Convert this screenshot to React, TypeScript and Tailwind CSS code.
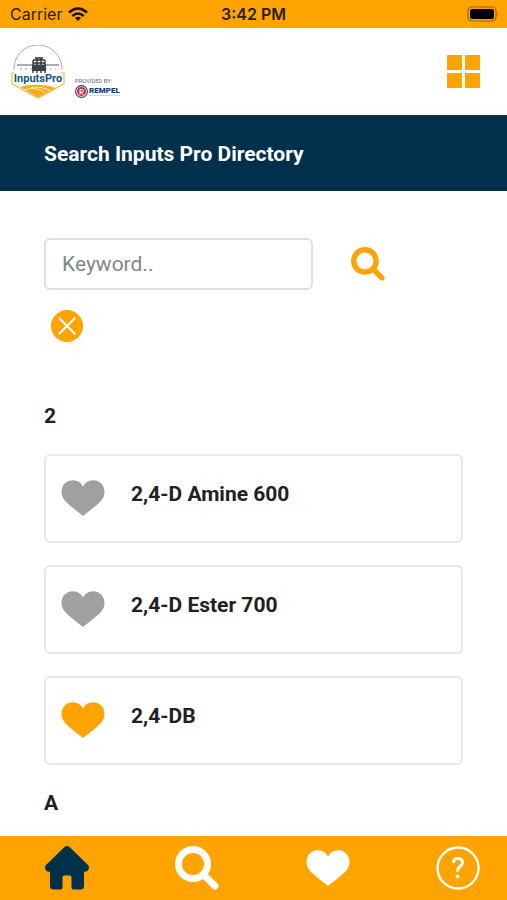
import { useState } from "react";
import type { FormEvent } from "react";

interface Product {
  id: number;
  name: string;
}

interface ProductGroup {
  letter: string;
  products: Product[];
}

const GROUPS: ProductGroup[] = [
  {
    letter: "2",
    products: [
      { id: 1, name: "2,4-D Amine 600" },
      { id: 2, name: "2,4-D Ester 700" },
      { id: 3, name: "2,4-DB" },
    ],
  },
  { letter: "A", products: [] },
];

function HeartIcon({ className }: { className?: string }) {
  return (
    <svg viewBox="0 0 44 36" className={className} aria-hidden="true">
      <path
        d="M22 36C16 31 8 25.500 3.800 20.500 1.600 17.900.5 15.200.5 12 .5 5.200 5.400.3 12 .3c4.300 0 7.800 2.200 10 6.200 2.200-4 5.700-6.200 10-6.200 6.600 0 11.500 4.900 11.500 11.700 0 3.200-1.100 5.900-3.300 8.500C36 25.500 28 31 22 36z"
        fill="currentColor"
      />
    </svg>
  );
}

function SearchIcon({ className }: { className?: string }) {
  return (
    <svg viewBox="0 0 44 44" className={className} aria-hidden="true">
      <circle
        cx="18"
        cy="18"
        r="14.5"
        fill="none"
        stroke="currentColor"
        strokeWidth="7"
      />
      <path
        d="m29 29 11 11"
        stroke="currentColor"
        strokeWidth="7"
        strokeLinecap="round"
      />
    </svg>
  );
}

function HomeIcon({ className }: { className?: string }) {
  return (
    <svg viewBox="0 0 44 44" className={className} aria-hidden="true">
      <path
        d="M19.200 1.200q2.800-2.400 5.600 0L43 19q1.600 2 .6 4.200-1 2.500-3.600 2.500h-1V40q0 3.500-3.500 3.500h-7q-2 0-2-2V31.500q0-2-2-2h-5q-2 0-2 2v10q0 2-2 2h-7Q5 43.500 5 40V25.700H4q-2.600 0-3.600-2.500Q-.6 21 1 19z"
        fill="currentColor"
      />
    </svg>
  );
}

function HelpIcon({ className }: { className?: string }) {
  return (
    <svg
      viewBox="0 0 44 44"
      className={className}
      fill="none"
      stroke="currentColor"
      aria-hidden="true"
    >
      <circle cx="22" cy="22" r="20.5" strokeWidth="2.400" />
      <path d="M17.500 17v-.8q0-3.700 4.500-3.700t4.500 4q0 2-2.500 4t-2.500 4.500v.8" strokeWidth="3" />
      <circle cx="21.500" cy="30.500" r="1.900" fill="currentColor" stroke="none" />
    </svg>
  );
}

function StatusBar() {
  return (
    <div className="grid h-7 shrink-0 grid-cols-3 items-center bg-[#ffa300] px-2 font-['Inter',sans-serif] text-base text-[#2b1c00]">
      <div className="flex items-center gap-1.5 pl-0.5">
        <span>Carrier</span>
        <svg viewBox="0 0 20 14" className="h-3.5 w-5" aria-label="Wi-Fi">
          <g fill="none" stroke="#1c1300" strokeWidth="2.600">
            <path d="M1 5.500q9-8 18 0" />
            <path d="M4.300 9q5.700-5 11.400 0" />
          </g>
          <path d="M7 11q3-2.500 6 0l-3 3z" fill="#1c1300" />
        </svg>
      </div>
      <span className="text-center font-semibold">3:42 PM</span>
      <svg viewBox="0 0 32 16" className="h-4 w-8 justify-self-end" aria-label="Battery">
        <rect x="1" y="1" width="28" height="14" rx="4" fill="none" stroke="#9b6608" strokeWidth="1.200" />
        <rect x="3" y="3" width="24" height="10" rx="2" fill="#000" />
        <path d="M30.500 6q1.500 2 0 4z" fill="#9b6608" />
      </svg>
    </div>
  );
}

function InputsProLogo() {
  return (
    <svg viewBox="0 0 54 54" className="size-[54px]" role="img" aria-label="InputsPro">
      <path d="M3 24a24 24 0 0 1 48 0" fill="none" stroke="#777" strokeWidth=".9" strokeDasharray="1.500 .6" />
      <path
        d="M4 28H1v11l26 14 26-14V28h-3"
        fill="none"
        stroke="#f5bd45"
        strokeWidth="1.200"
      />
      <path d="M9 42q16-5 36 1L27 52.500z" fill="#f3ad16" />
      <path d="M13 45q13-4 21 3M20 42.500q12-1 19 3" fill="none" stroke="#fff" strokeWidth=".8" />
      <g stroke="#29323a" fill="none">
        <path d="M6 20h42" strokeWidth="1" stroke="#5c5552" />
        <path d="M9 24h36" strokeWidth="1" strokeDasharray="2 3" stroke="#a0a2a4" />
        <path d="M22 15h12M24 13h8M22 18h12M22 28V15M34 28V15M26 13v15M30 13v15" strokeWidth="1.300" />
      </g>
      <path d="M21 20h14v6H21z" fill="#3b434a" />
      <text
        x="27"
        y="37"
        textAnchor="middle"
        fontFamily="Roboto"
        fontWeight="700"
        fontSize="11"
        fill="#145678"
        stroke="#fff"
        strokeWidth="1.500"
        paintOrder="stroke"
      >
        InputsPro
      </text>
    </svg>
  );
}

function RempelLogo() {
  return (
    <svg viewBox="0 0 46 22" className="h-[22px] w-[46px]" role="img" aria-label="Rempel">
      <text x="0" y="6" fontFamily="Roboto" fontSize="5.800" fill="#666">
        PROVIDED BY:
      </text>
      <circle cx="6.500" cy="14.500" r="6.500" fill="#354669" />
      <circle cx="6.500" cy="14.500" r="5.300" fill="#fff" />
      <circle cx="6.500" cy="14.500" r="4.500" fill="#c92c49" />
      <path d="M5 17.500v-5h2q1.500 0 1.500 1.300t-1.500 1.300h-2l3.500 2.400" fill="none" stroke="#fff" />
      <text x="14" y="16" fontFamily="Roboto" fontWeight="900" fontSize="8" fill="#123f70">
        REMPEL
      </text>
      <path d="M14 18.500h31" stroke="#c3cad3" strokeDasharray="2 .7" />
    </svg>
  );
}

function Header() {
  return (
    <header className="flex h-[87px] shrink-0 items-center justify-between bg-white pl-[11px] pr-[27px]">
      <a href="#home" className="flex items-end gap-2.5">
        <InputsProLogo />
        <RempelLogo />
      </a>
      <button type="button" aria-label="Menu" className="grid grid-cols-2 gap-[3px]">
        <span className="size-[15px] bg-[#ffa300]" />
        <span className="size-[15px] bg-[#ffa300]" />
        <span className="size-[15px] bg-[#ffa300]" />
        <span className="size-[15px] bg-[#ffa300]" />
      </button>
    </header>
  );
}

interface ProductCardProps {
  product: Product;
  isFavourite: boolean;
  onToggle: (id: number) => void;
}

function ProductCard({ product, isFavourite, onToggle }: ProductCardProps) {
  return (
    <li className="flex h-[89px] items-start gap-[26px] rounded-md border-2 border-[#e8e8e8] px-[15px] pt-6">
      <button
        type="button"
        aria-label={`Favourite ${product.name}`}
        aria-pressed={isFavourite}
        onClick={() => onToggle(product.id)}
        className={isFavourite ? "text-[#ffa300]" : "text-[#a0a0a0]"}
      >
        <HeartIcon className="h-9 w-11" />
      </button>
      <a href={`#product-${product.id}`} className="font-bold leading-7">
        {product.name}
      </a>
    </li>
  );
}

function BottomNav() {
  return (
    <nav className="flex h-16 shrink-0 items-center justify-between bg-[#ffa300] pl-[45px] pr-[27px] text-white">
      <a href="#home" aria-label="Home" className="text-[#00304a]">
        <HomeIcon className="size-11" />
      </a>
      <a href="#search" aria-label="Search">
        <SearchIcon className="size-11" />
      </a>
      <a href="#favourites" aria-label="Favourites">
        <HeartIcon className="h-9 w-11" />
      </a>
      <a href="#help" aria-label="Help">
        <HelpIcon className="size-11" />
      </a>
    </nav>
  );
}

export default function App() {
  const [keyword, setKeyword] = useState("");
  const [query, setQuery] = useState("");
  const [favourites, setFavourites] = useState<number[]>([3]);

  function handleSearch(e: FormEvent) {
    e.preventDefault();
    setQuery(keyword.toLowerCase());
  }

  function handleClear() {
    setKeyword("");
    setQuery("");
  }

  function toggleFavourite(id: number) {
    setFavourites((prev) =>
      prev.includes(id) ? prev.filter((f) => f !== id) : [...prev, id],
    );
  }

  return (
    <div className="flex h-dvh flex-col bg-white font-['Roboto',sans-serif] text-[21px] text-[#212121]">
      <StatusBar />
      <Header />
      <div className="flex h-19 shrink-0 items-center bg-[#00304a] px-11 pt-1">
        <h1 className="font-bold text-white">Search Inputs Pro Directory</h1>
      </div>
      <main className="min-h-0 flex-1 overflow-y-auto px-11 pt-[47px]">
        <form onSubmit={handleSearch}>
          <div className="grid grid-cols-[9fr_5fr] items-center">
            <input
              type="text"
              aria-label="Keyword"
              placeholder="Keyword.."
              value={keyword}
              onChange={(e) => setKeyword(e.target.value)}
              className="h-13 min-w-0 rounded-md border-2 border-[#dee0e2] px-4 placeholder:text-[#80868b]"
            />
            <button type="submit" aria-label="Search" className="ml-[38px] justify-self-start text-[#ffa300]">
              <SearchIcon className="size-[34px]" />
            </button>
          </div>
          <button type="button" aria-label="Clear" onClick={handleClear} className="ml-[7px] mt-5 block">
            <svg viewBox="0 0 32 32" className="size-8" aria-hidden="true">
              <circle cx="16" cy="16" r="16" fill="#ffa300" />
              <path d="m8.500 8.500 15 15m0-15-15 15" stroke="#fff" strokeWidth="2.200" strokeLinecap="round" />
            </svg>
          </button>
        </form>
        <div className="mt-[60px] flex flex-col gap-6">
          {GROUPS.map((group) => (
            <section key={group.letter} className="flex flex-col gap-6">
              <h2 className="font-bold leading-7">{group.letter}</h2>
              {group.products.length > 0 && (
                <ul className="flex flex-col gap-[22px]">
                  {group.products
                    .filter((p) => p.name.toLowerCase().includes(query))
                    .map((p) => (
                      <ProductCard
                        key={p.id}
                        product={p}
                        isFavourite={favourites.includes(p.id)}
                        onToggle={toggleFavourite}
                      />
                    ))}
                </ul>
              )}
            </section>
          ))}
        </div>
      </main>
      <BottomNav />
    </div>
  );
}
